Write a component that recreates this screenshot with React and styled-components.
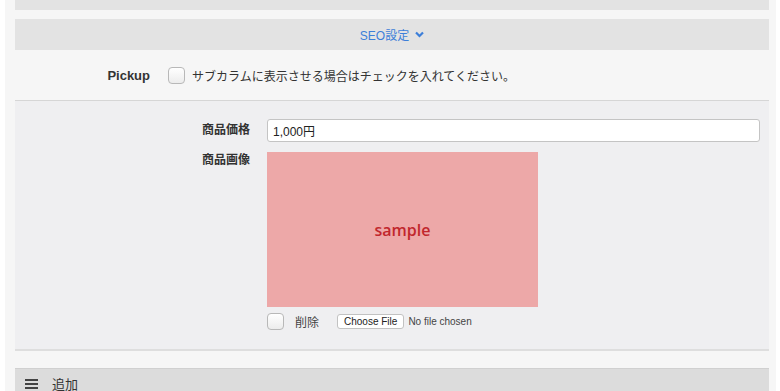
import React from "react";
import styled, { createGlobalStyle } from "styled-components";

const GlobalStyle = createGlobalStyle`
  html, body {
    margin: 0;
    padding: 0;
    background: #ffffff;
  }
  body {
    font-family: "Liberation Sans", "Noto Sans CJK JP", sans-serif;
    color: #333;
  }
`;

const Page = styled.div`
  margin: 0 4px 0 5px;
  padding: 0 7px 0 10px;
  background: #f6f6f6;
  height: 391px;
  overflow: hidden;
`;

const TopBar = styled.div`
  height: 10px;
  background: #e3e3e3;
  margin-bottom: 9px;
`;

const Toggle = styled.div`
  height: 31px;
  background: #e3e3e3;
  display: flex;
  align-items: center;
  justify-content: center;
  gap: 6px;
  color: #3d7fd9;
  font-size: 12px;
`;

const Row = styled.div`
  display: flex;
  align-items: center;
  height: 50px;
  border-bottom: 1px solid #d6d6d6;
`;

const PickLabel = styled.div`
  width: 135px;
  text-align: right;
  font-size: 13px;
  font-weight: bold;
  color: #333;
  margin-right: 18px;
`;

const Check = styled.span`
  display: inline-block;
  box-sizing: border-box;
  width: 17px;
  height: 17px;
  border: 1px solid #b8b8b8;
  border-radius: 4px;
  background: linear-gradient(#ffffff, #ececec);
  margin-right: ${(p) => p.$gap || 7}px;
  flex-shrink: 0;
`;

const Note = styled.span`
  font-size: 12px;
  color: #333;
`;

const Section = styled.div`
  background: #efeff1;
  padding: 18px 9px 19px 0;
  border-bottom: 2px solid #dedede;
  display: flex;
  flex-direction: column;
  gap: 10px;
`;

const Field = styled.div`
  display: flex;
  align-items: flex-start;
`;

const FieldLabel = styled.div`
  width: 235px;
  flex-shrink: 0;
  text-align: right;
  font-size: 12px;
  font-weight: bold;
  color: #333;
  margin-right: 17px;
  line-height: ${(p) => p.$lh || 23}px;
`;

const TextInput = styled.input`
  flex: 1;
  box-sizing: border-box;
  height: 23px;
  border: 1px solid #c4c4c4;
  border-radius: 3px;
  background: #fff;
  padding: 0 5px;
  font-family: "Liberation Sans", "Noto Sans CJK JP", sans-serif;
  font-size: 12px;
  color: #222;
  outline: none;
`;

const ImageCol = styled.div`
  display: flex;
  flex-direction: column;
  gap: 6px;
`;

const Sample = styled.div`
  width: 271px;
  height: 155px;
  background: #eda8a8;
  display: flex;
  align-items: center;
  justify-content: center;
  color: #c1272d;
  font-family: "Open Sans", sans-serif;
  font-weight: 600;
  font-size: 16px;
`;

const Controls = styled.div`
  display: flex;
  align-items: center;
  height: 17px;
`;

const DelLabel = styled.span`
  font-size: 12px;
  color: #444;
  margin-right: 18px;
`;

const FileButton = styled.span`
  box-sizing: border-box;
  height: 15px;
  padding: 0 6px;
  border: 1px solid #c2c2c2;
  border-radius: 3px;
  background: #fff;
  font-size: 10px;
  line-height: 13px;
  color: #222;
  margin-right: 4px;
`;

const FileNote = styled.span`
  font-size: 10px;
  color: #444;
`;

const AddBar = styled.div`
  margin-top: 17px;
  height: 40px;
  background: #dcdcdc;
  border-top: 1px solid #d0d0d0;
  display: flex;
  align-items: center;
  padding: 0 0 0 10px;
  gap: 14px;
  font-size: 13px;
  line-height: 15px;
  color: #333;
  box-sizing: border-box;
  align-content: flex-start;
  & > * {
    align-self: flex-start;
    margin-top: 8px;
  }
`;

const Burger = () => (
  <svg width="13" height="12" viewBox="0 0 13 12">
    <rect x="0" y="2" width="13" height="2" fill="#444" />
    <rect x="0" y="6" width="13" height="2" fill="#444" />
    <rect x="0" y="10" width="13" height="2" fill="#444" />
  </svg>
);

const Chevron = () => (
  <svg width="9" height="7" viewBox="0 0 9 7">
    <path d="M1 1.5 L4.5 5 L8 1.5" fill="none" stroke="#3d7fd9" strokeWidth="2.2" />
  </svg>
);

export default function App() {
  return (
    <>
      <GlobalStyle />
      <Page>
        <TopBar />
        <Toggle>
          SEO設定
          <Chevron />
        </Toggle>
        <Row>
          <PickLabel>Pickup</PickLabel>
          <Check />
          <Note>サブカラムに表示させる場合はチェックを入れてください。</Note>
        </Row>
        <Section>
          <Field>
            <FieldLabel>商品価格</FieldLabel>
            <TextInput defaultValue="1,000円" />
          </Field>
          <Field>
            <FieldLabel $lh={16}>商品画像</FieldLabel>
            <ImageCol>
              <Sample>sample</Sample>
              <Controls>
                <Check $gap={11} />
                <DelLabel>削除</DelLabel>
                <FileButton>Choose File</FileButton>
                <FileNote>No file chosen</FileNote>
              </Controls>
            </ImageCol>
          </Field>
        </Section>
        <AddBar>
          <Burger />
          <span>追加</span>
        </AddBar>
      </Page>
    </>
  );
}
